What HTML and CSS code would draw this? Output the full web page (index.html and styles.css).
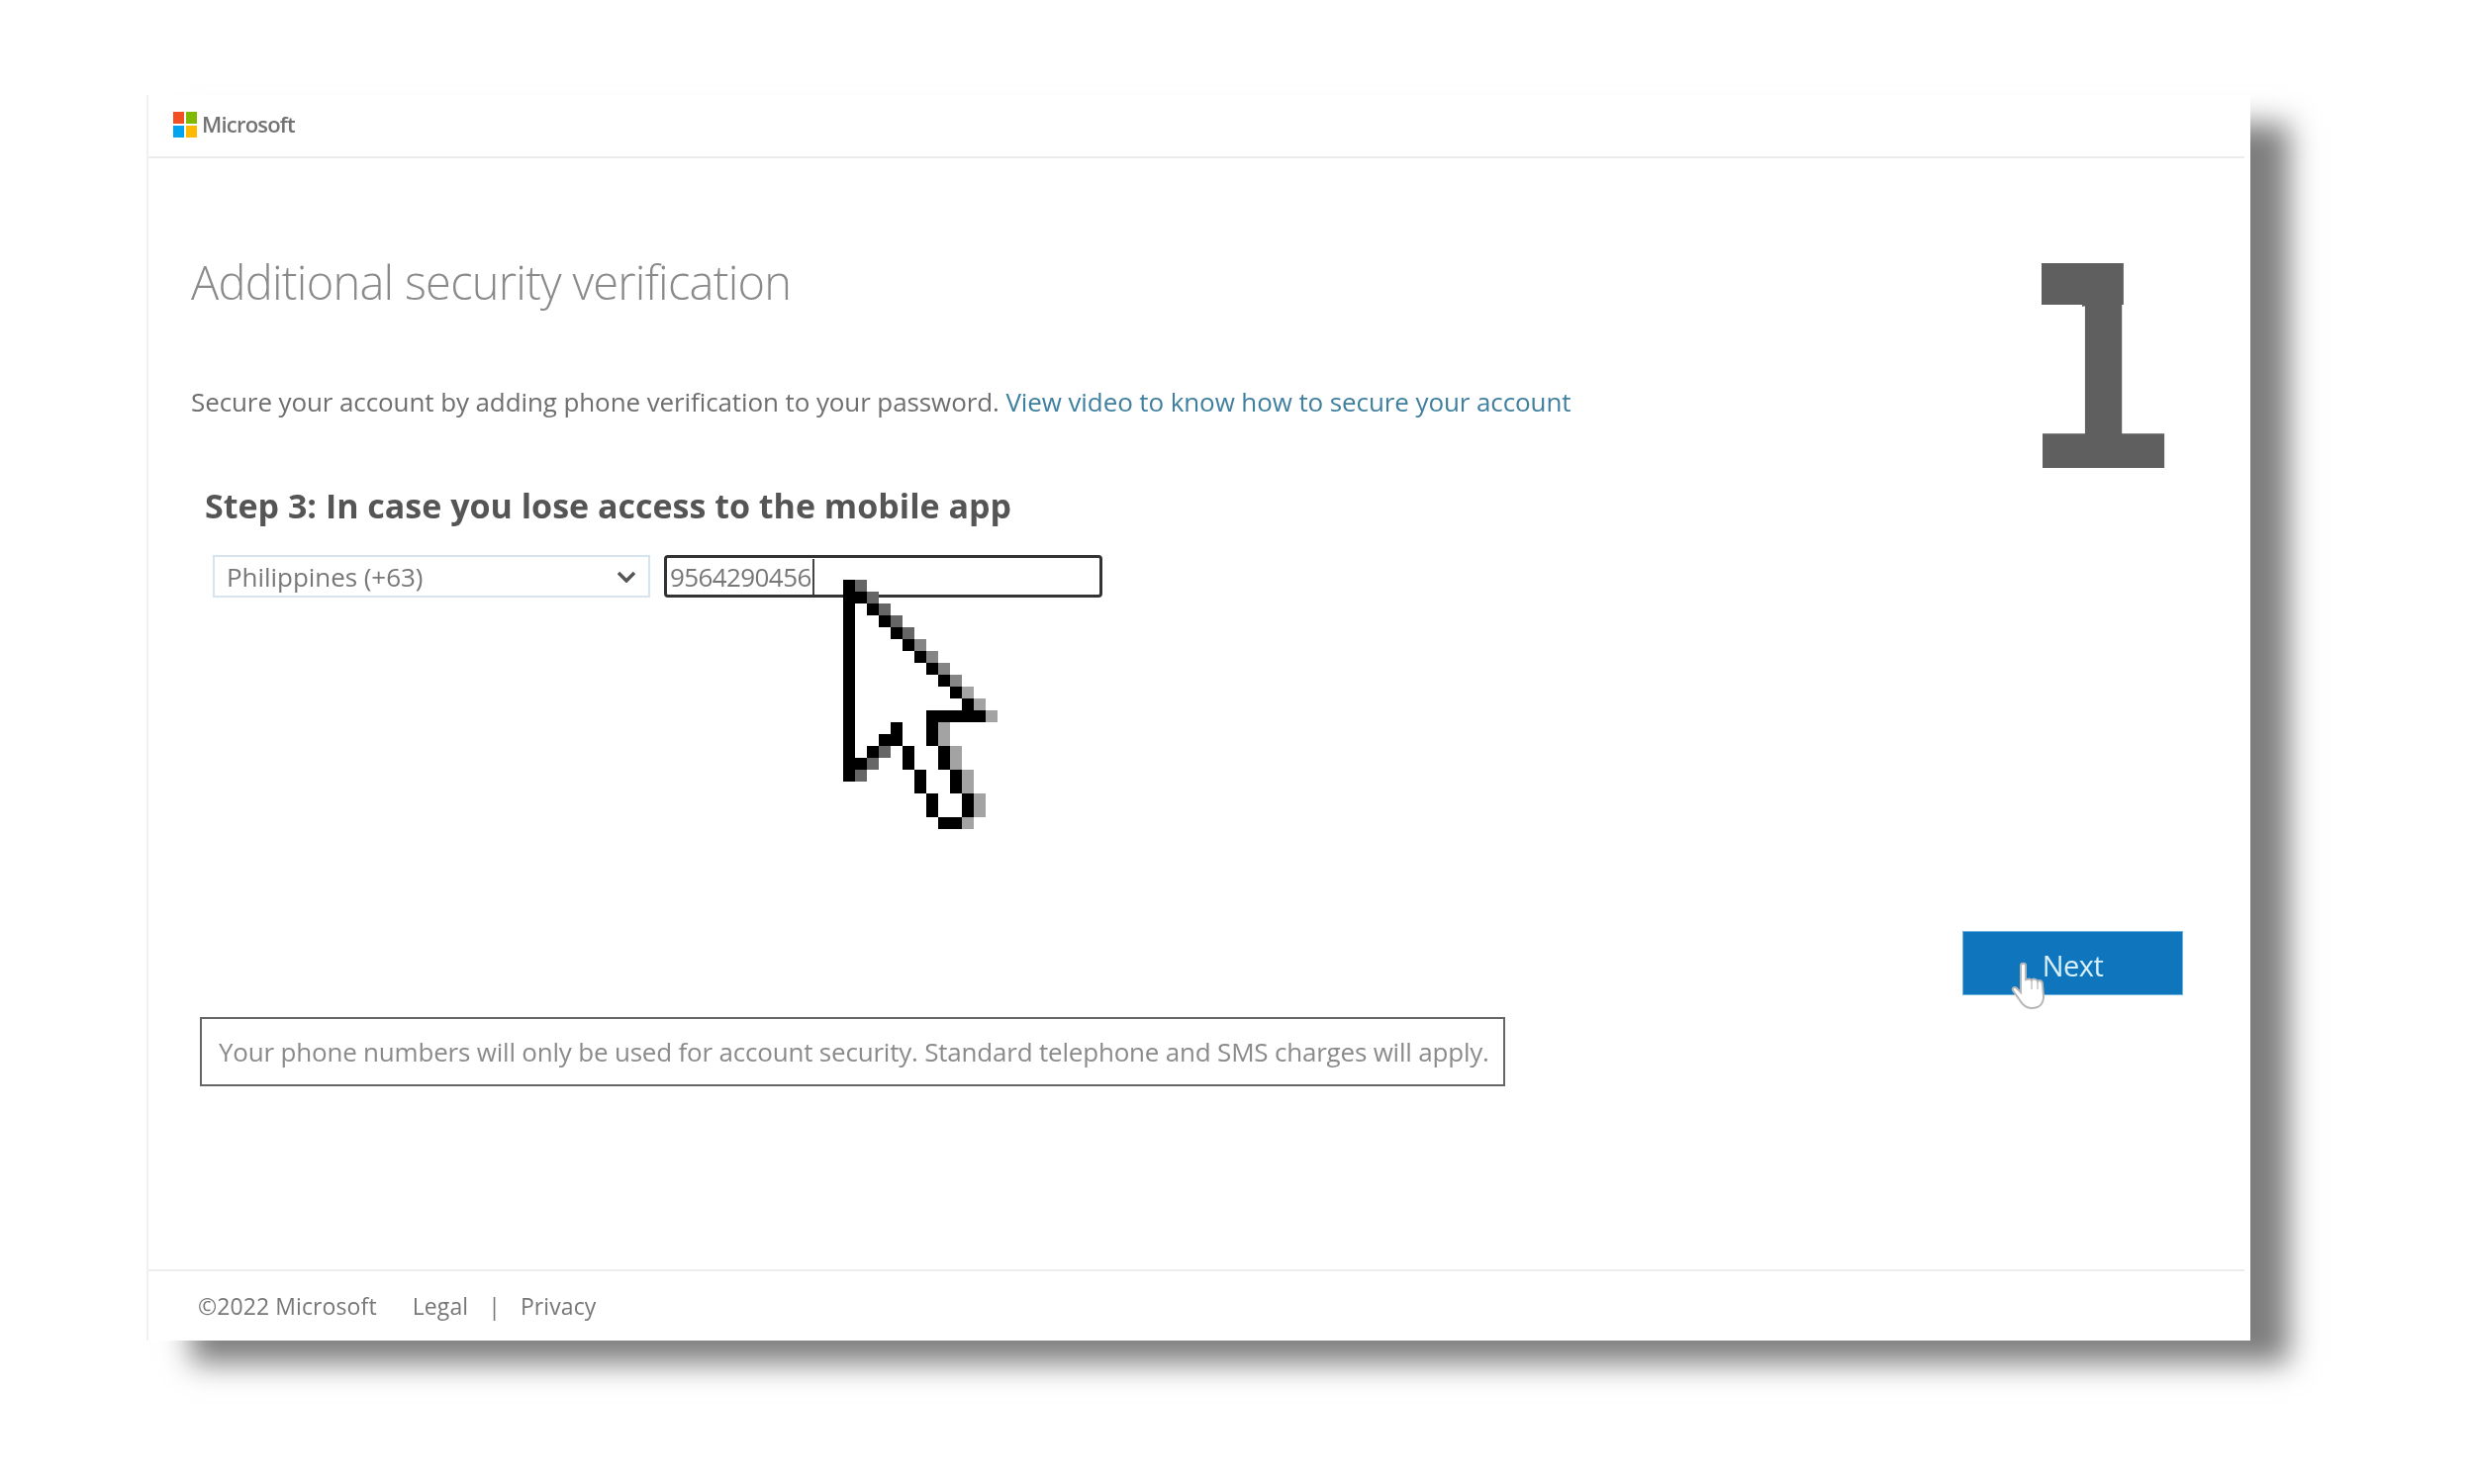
FILE: index.html
```html
<!DOCTYPE html>
<html lang="en">
<head>
    <meta charset="UTF-8">
    <title>Additional security verification</title>
    <link rel="stylesheet" href="styles.css">
</head>
<body>

    <div class="card">
        <!-- Logo -->
        <header class="top-bar">
            <div class="logo-grid">
                <span class="logo-red"></span>
                <span class="logo-green"></span>
                <span class="logo-blue"></span>
                <span class="logo-yellow"></span>
            </div>
            <span class="logo-text">Microsoft</span>
        </header>

        <main class="content">
            <h1 class="title">Additional security verification</h1>
            <p class="intro">Secure your account by adding phone verification to your password. <a href="#">View video to know how to secure your account</a></p>
            <h2 class="step">Step 3: In case you lose access to the mobile app</h2>

            <div class="phone-row">
                <div class="country">
                    <span>Philippines (+63)</span>
                    <svg class="chevron" viewBox="0 0 20 12" width="20" height="12">
                        <path d="M2 2 L10 10 L18 2" fill="none" stroke="#555" stroke-width="3.5"/>
                    </svg>
                </div>
                <div class="phone"><span class="phone-value">9564290456</span></div>
            </div>

            <div class="actions">
                <button class="next">Next</button>
            </div>

            <div class="notice">Your phone numbers will only be used for account security. Standard telephone and SMS charges will apply.</div>
        </main>

        <footer class="bottom-bar">
            <span class="copyright">©2022 Microsoft</span>
            <a href="#">Legal</a>
            <span class="divider">|</span>
            <a href="#">Privacy</a>
        </footer>

        <!-- Step number -->
        <div class="step-number">1</div>

        <!-- Big pixel arrow -->
        <svg class="big-arrow" viewBox="0 0 13 21" width="156" height="252" shape-rendering="crispEdges">
            <path fill="#666" d="M1 0h1v1h-1z M2 1h1v1h-1z M3 2h1v1h-1z M4 3h1v1h-1z M5 4h1v1h-1z M3 14h1v1h-1z M2 15h1v1h-1z M1 16h1v1h-1z"/>
            <path fill="#858585" d="M6 5h1v1h-1z M7 6h1v1h-1z M8 7h1v1h-1z M9 8h1v1h-1z"/>
            <path fill="#a3a3a3" d="M10 9h1v1h-1z M11 10h1v1h-1z M12 11h1v1h-1z M8 12h1v2h-1z M9 14h1v2h-1z M10 16h1v2h-1z M11 18h1v2h-1z M10 20h1v1h-1z"/>
            <path fill="#000" d="M0 0h1v17h-1z M1 1h1v1h-1z M2 2h1v1h-1z M3 3h1v1h-1z M4 4h1v1h-1z M5 5h1v1h-1z M6 6h1v1h-1z M7 7h1v1h-1z M8 8h1v1h-1z M9 9h1v1h-1z M10 10h1v1h-1z M7 11h5v1h-5z M7 12h1v2h-1z M8 14h1v2h-1z M9 16h1v2h-1z M10 18h1v2h-1z M8 20h2v1h-2z M7 18h1v2h-1z M6 16h1v2h-1z M5 14h1v2h-1z M4 12h1v2h-1z M3 13h1v1h-1z M2 14h1v1h-1z M1 15h1v1h-1z"/>
        </svg>

        <!-- Hand over the button -->
        <svg class="hand" viewBox="0 0 36 50" width="36" height="50">
            <path d="M10 4 C10 1 15 1 15 4 L15 19 C16 17 20 17 21 19 C22 17 26 17 27 20 C28 18 32 19 32 23 L33 35 C33 43 28 47 21 47 C15 47 12 44 9 39 L2 29 C1 26 4 25 6 27 L10 31 Z" fill="#fff" stroke="#b5b5b5" stroke-width="2"/>
            <path d="M21 20 V28 M27 21 V28" fill="none" stroke="#c5c5c5" stroke-width="1.5"/>
        </svg>
    </div>

</body>
</html>
```

FILE: styles.css
```css
/* General */
html {
    height: 100%;
}

body {
    margin: 0;
    min-height: 1500px;
    box-sizing: border-box;
    padding: 96px 0 0 148px;
    background: #fff;
    font-family: "Open Sans", sans-serif;
    color: #777;
}

.card {
    position: relative;
    width: 2126px;
    height: 1259px;
    display: flex;
    flex-direction: column;
    background: #fff;
    border-left: 2px solid #f0f0f0;
    box-sizing: border-box;
    box-shadow: 42px 26px 28px -3px #7e7e7e;
}

a {
    color: inherit;
    text-decoration: none;
}

/* Top bar */
.top-bar {
    flex-shrink: 0;
    display: flex;
    align-items: center;
    gap: 5px;
    margin-right: 6px;
    padding: 0 0 3px 25px;
    height: 59px;
    border-bottom: 2px solid #ececec;
    filter: blur(0.7px);
}

.logo-grid {
    display: grid;
    grid-template-columns: 11px 11px;
    grid-template-rows: 12px 12px;
    gap: 2px;
}

.logo-red { background: #f25022; }
.logo-green { background: #7fba00; }
.logo-blue { background: #00a4ef; }
.logo-yellow { background: #ffb900; }

.logo-text {
    margin-top: -2px;
    font-size: 22px;
    font-weight: 600;
    letter-spacing: -0.8px;
    color: #737373;
}

/* Main part */
.content {
    flex: 1;
    display: flex;
    flex-direction: column;
    padding: 92px 68px 0 43px;
    filter: blur(0.7px);
}

.title {
    margin: 0;
    font-size: 47px;
    line-height: 66px;
    font-weight: 300;
    letter-spacing: -0.75px;
    color: #8a8a8a;
}

.intro {
    margin: 70px 0 0;
    font-size: 26px;
    line-height: 36px;
    letter-spacing: -0.1px;
    color: #6e6e6e;
}

.intro a {
    color: #3f7f9f;
}

.step {
    margin: 64px 0 0 14px;
    font-size: 34px;
    line-height: 46px;
    font-weight: 700;
    letter-spacing: 0;
    color: #555;
}

.phone-row {
    display: flex;
    gap: 14px;
    margin: 27px 0 0 22px;
}

.country {
    width: 442px;
    height: 43px;
    box-sizing: border-box;
    display: flex;
    align-items: center;
    justify-content: space-between;
    padding: 0 12px;
    border: 2px solid #d5e4ee;
    font-size: 26px;
    letter-spacing: -0.05px;
    color: #777;
}

.phone {
    width: 443px;
    height: 43px;
    box-sizing: border-box;
    display: flex;
    align-items: center;
    padding-left: 3px;
    border: 3px solid #333;
    border-radius: 4px;
    font-size: 26px;
    letter-spacing: -0.6px;
    color: #777;
}

.phone-value {
    border-right: 2px solid #444;
    padding-right: 1px;
}

.actions {
    display: flex;
    justify-content: flex-end;
    margin-top: 337px;
}

.next {
    width: 223px;
    height: 65px;
    padding: 3px 0 0 0;
    border: 1px solid #6fb6de;
    background: #0f75bc;
    color: #d8f0fa;
    font-family: "Open Sans", sans-serif;
    font-size: 29px;
    letter-spacing: -0.5px;
}

.notice {
    align-self: flex-start;
    width: 1319px;
    height: 70px;
    box-sizing: border-box;
    margin: 22px 0 0 9px;
    display: flex;
    align-items: center;
    padding-left: 17px;
    border: 2px solid #666;
    font-size: 26px;
    letter-spacing: -0.2px;
    white-space: nowrap;
    color: #8a8a8a;
}

/* Footer */
.bottom-bar {
    height: 70px;
    flex-shrink: 0;
    display: flex;
    align-items: center;
    margin-right: 6px;
    padding-left: 50px;
    border-top: 2px solid #ececec;
    font-size: 23px;
    letter-spacing: 0.1px;
    color: #777;
    filter: blur(0.7px);
}

.copyright {
    margin-right: 36px;
}

.divider {
    margin: 0 20px;
}

/* Things lying over the page */
.step-number {
    position: absolute;
    left: 1889px;
    top: 118px;
    font-family: "DejaVu Sans Mono", monospace;
    font-weight: 700;
    font-size: 273px;
    line-height: 330px;
    color: #5f5f5f;
    transform: scaleX(0.975);
    transform-origin: 24px 0;
}

/* square flag of the 1, the font's own flag is slanted */
.step-number::before {
    content: "";
    position: absolute;
    left: 24px;
    top: 52px;
    width: 85px;
    height: 42px;
    background: #5f5f5f;
}

.step-number::after {
    content: "";
    position: absolute;
    left: 10px;
    top: 94px;
    width: 56px;
    height: 124px;
    background: #fff;
}

.big-arrow {
    position: absolute;
    left: 702px;
    top: 490px;
}

.hand {
    position: absolute;
    left: 1882px;
    top: 876px;
}
```
